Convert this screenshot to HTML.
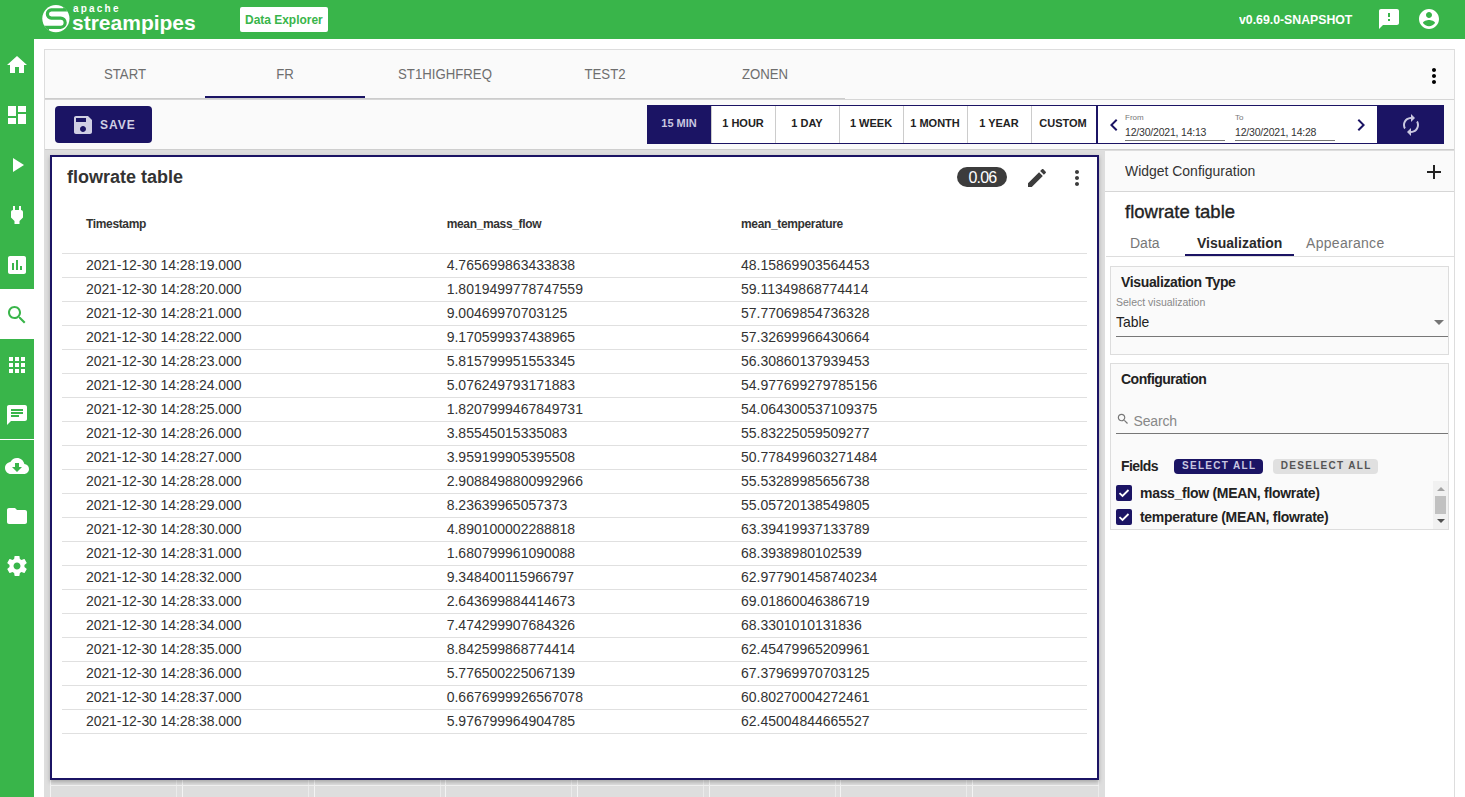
<!DOCTYPE html>
<html><head><meta charset="utf-8"><title>StreamPipes Data Explorer</title>
<style>
*{box-sizing:border-box;margin:0;padding:0}
html,body{width:1465px;height:797px;overflow:hidden;background:#fff;font-family:"Liberation Sans",sans-serif;color:#333}
.a{position:absolute;white-space:nowrap}
.t{position:absolute;white-space:nowrap;line-height:1}
</style></head><body>

<div class="a" style="left:0;top:0;width:1465px;height:39px;background:#39b54a"></div>
<svg class="a" style="left:38px;top:0" width="40" height="38" viewBox="38 0 40 38">
<defs><clipPath id="lc"><circle cx="55.9" cy="18.6" r="13.6"/></clipPath></defs>
<circle cx="55.9" cy="18.6" r="13.6" fill="#fff"/>
<g clip-path="url(#lc)" fill="none" stroke="#39b54a" stroke-width="3.2">
<path d="M80 9.85 H51.3 A4.13 4.13 0 0 0 51.3 18.1 H60.6 A4.6 4.6 0 0 1 60.6 27.3 H30"/>
</g>
<g clip-path="url(#lc)" fill="#39b54a"><rect x="63.3" y="0" width="20" height="9.9"/><rect x="30" y="27.3" width="19" height="15"/></g>
</svg>
<div class="t" style="left:73px;top:4px;font-size:10px;font-weight:bold;color:#fff;letter-spacing:2.2px">apache</div>
<div class="t" style="left:72px;top:12px;font-size:21px;font-weight:bold;color:#fff;letter-spacing:0px">streampipes</div>
<div class="a" style="left:240px;top:7px;width:88px;height:25px;background:#fff;border-radius:2px"></div>
<div class="t" style="left:245px;top:12.5px;font-size:13px;font-weight:bold;color:#39b54a;transform:scaleX(0.92);transform-origin:0 0">Data Explorer</div>
<div class="t" style="left:1239px;top:13px;font-size:13px;font-weight:bold;color:#fff;transform:scaleX(0.945);transform-origin:0 0">v0.69.0-SNAPSHOT</div>
<svg style="position:absolute;left:1377px;top:7px;width:24px;height:24px" viewBox="0 0 24 24"><path fill="#fff" d="M20 2H4c-1.1 0-1.99.9-1.99 2L2 22l4-4h14c1.1 0 2-.9 2-2V4c0-1.1-.9-2-2-2zm-7 12h-2v-2h2v2zm0-4h-2V6h2v4z"/></svg>
<svg style="position:absolute;left:1417px;top:7px;width:24px;height:24px" viewBox="0 0 24 24"><path fill="#fff" d="M12 2C6.48 2 2 6.48 2 12s4.48 10 10 10 10-4.48 10-10S17.52 2 12 2zm0 3c1.66 0 3 1.34 3 3s-1.34 3-3 3-3-1.34-3-3 1.34-3 3-3zm0 14.2c-2.5 0-4.71-1.28-6-3.22.03-1.99 4-3.08 6-3.08 1.99 0 5.97 1.09 6 3.08-1.29 1.94-3.5 3.22-6 3.220z"/></svg>
<div class="a" style="left:0;top:39px;width:34px;height:758px;background:#39b54a"></div>
<div class="a" style="left:0;top:289px;width:34px;height:50px;background:#fff"></div>
<div class="a" style="left:0;top:439px;width:34px;height:1px;background:#fff"></div>
<svg style="position:absolute;left:4.5px;top:53px;width:24px;height:24px" viewBox="0 0 24 24"><path fill="#fff" d="M10 20v-6h4v6h5v-8h3L12 3 2 12h3v8z"/></svg>
<svg style="position:absolute;left:4.5px;top:103px;width:24px;height:24px" viewBox="0 0 24 24"><path fill="#fff" d="M3 13h8V3H3v10zm0 8h8v-6H3v6zm10 0h8V11h-8v10zm0-18v6h8V3h-8z"/></svg>
<svg style="position:absolute;left:4.5px;top:153px;width:24px;height:24px" viewBox="0 0 24 24"><path fill="#fff" d="M8 5v14l11-7z"/></svg>
<svg style="position:absolute;left:4.5px;top:203px;width:24px;height:24px" viewBox="0 0 24 24"><path fill="#fff" d="M16.01 7L16 3h-2v4h-4V3H8v4h-.01C7 6.99 6 7.99 6 8.99v5.49L9.5 18v3h5v-3l3.5-3.51v-5.5c0-1-1-2-1.99-1.99z"/></svg>
<svg style="position:absolute;left:4.5px;top:253px;width:24px;height:24px" viewBox="0 0 24 24"><path fill="#fff" d="M19 3H5c-1.1 0-2 .9-2 2v14c0 1.1.9 2 2 2h14c1.1 0 2-.9 2-2V5c0-1.1-.9-2-2-2zM9 17H7v-7h2v7zm4 0h-2V7h2v10zm4 0h-2v-4h2v4z"/></svg>
<svg style="position:absolute;left:4.5px;top:303px;width:24px;height:24px" viewBox="0 0 24 24"><path fill="#39b54a" d="M15.5 14h-.79l-.28-.27C15.41 12.59 16 11.11 16 9.5 16 5.91 13.09 3 9.5 3S3 5.91 3 9.5 5.91 16 9.5 16c1.61 0 3.09-.59 4.23-1.57l.27.28v.79l5 4.99L20.49 19l-4.99-5zm-6 0C7.01 14 5 11.99 5 9.5S7.01 5 9.5 5 14 7.01 14 9.5 11.99 14 9.5 14z"/></svg>
<svg style="position:absolute;left:4.5px;top:353px;width:24px;height:24px" viewBox="0 0 24 24"><path fill="#fff" d="M4 8h4V4H4v4zm6 12h4v-4h-4v4zm-6 0h4v-4H4v4zm0-6h4v-4H4v4zm6 0h4v-4h-4v4zm6-10v4h4V4h-4zm-6 4h4V4h-4v4zm6 6h4v-4h-4v4zm0 6h4v-4h-4v4z"/></svg>
<svg style="position:absolute;left:4.5px;top:403px;width:24px;height:24px" viewBox="0 0 24 24"><path fill="#fff" d="M20 2H4c-1.1 0-1.99.9-1.99 2L2 22l4-4h14c1.1 0 2-.9 2-2V4c0-1.1-.9-2-2-2zM6 9h12v2H6V9zm8 5H6v-2h8v2zm4-6H6V6h12v2z"/></svg>
<svg style="position:absolute;left:4.5px;top:454px;width:24px;height:24px" viewBox="0 0 24 24"><path fill="#fff" d="M19.35 10.04C18.67 6.59 15.64 4 12 4 9.11 4 6.6 5.64 5.35 8.04 2.34 8.36 0 10.91 0 14c0 3.310 2.69 6 6 6h13c2.76 0 5-2.24 5-5 0-2.64-2.05-4.78-4.65-4.96zM17 13l-5 5-5-5h3V9h4v4h3z"/></svg>
<svg style="position:absolute;left:4.5px;top:504px;width:24px;height:24px" viewBox="0 0 24 24"><path fill="#fff" d="M10 4H4c-1.1 0-1.99.9-1.99 2L2 18c0 1.1.9 2 2 2h16c1.1 0 2-.9 2-2V8c0-1.1-.9-2-2-2h-8l-2-2z"/></svg>
<svg style="position:absolute;left:4.5px;top:554px;width:24px;height:24px" viewBox="0 0 24 24"><path fill="#fff" d="M19.43 12.98c.04-.32.07-.64.07-.98s-.03-.66-.07-.98l2.11-1.650c.19-.15.24-.42.12-.64l-2-3.46c-.12-.22-.39-.3-.61-.22l-2.49 1c-.52-.4-1.08-.73-1.69-.98l-.38-2.65C14.46 2.18 14.25 2 14 2h-4c-.25 0-.46.18-.49.42l-.38 2.65c-.61.25-1.17.59-1.69.98l-2.49-1c-.23-.09-.49 0-.61.22l-2 3.46c-.13.22-.07.49.12.64l2.11 1.65c-.04.32-.07.65-.07.98s.03.66.07.98l-2.11 1.65c-.19.15-.24.42-.12.64l2 3.46c.12.22.39.3.61.22l2.49-1c.52.4 1.08.73 1.69.98l.38 2.65c.03.24.24.42.49.42h4c.25 0 .46-.18.49-.42l.38-2.65c.61-.25 1.17-.59 1.69-.98l2.49 1c.23.09.49 0 .61-.22l2-3.46c.12-.22.07-.49-.12-.64l-2.11-1.65zM12 15.5c-1.93 0-3.5-1.57-3.5-3.5s1.57-3.5 3.5-3.5 3.5 1.57 3.5 3.5-1.57 3.5-3.5 3.5z"/></svg>
<div class="a" style="left:44px;top:49px;width:1411px;height:101px;background:#fafafa;border:1px solid #ddd"></div>
<div class="a" style="left:45px;top:98px;width:800px;height:1px;background:#ccc"></div>
<div class="a" style="left:45px;top:99px;width:1409px;height:1px;background:#d6d6d6"></div>
<div class="t" style="left:45px;top:65.5px;width:160px;text-align:center;font-size:15px;color:#6e6e6e;transform:scaleX(0.88);transform-origin:50% 0">START</div>
<div class="t" style="left:205px;top:65.5px;width:160px;text-align:center;font-size:15px;color:#6e6e6e;transform:scaleX(0.88);transform-origin:50% 0">FR</div>
<div class="t" style="left:365px;top:65.5px;width:160px;text-align:center;font-size:15px;color:#6e6e6e;transform:scaleX(0.88);transform-origin:50% 0">ST1HIGHFREQ</div>
<div class="t" style="left:525px;top:65.5px;width:160px;text-align:center;font-size:15px;color:#6e6e6e;transform:scaleX(0.88);transform-origin:50% 0">TEST2</div>
<div class="t" style="left:685px;top:65.5px;width:160px;text-align:center;font-size:15px;color:#6e6e6e;transform:scaleX(0.88);transform-origin:50% 0">ZONEN</div>
<div class="a" style="left:205px;top:96px;width:160px;height:2px;background:#1b1464"></div>
<svg class="a" style="left:1422px;top:64px" width="24" height="24" viewBox="0 0 24 24"><path fill="#000" d="M12 8c1.1 0 2-.9 2-2s-.9-2-2-2-2 .9-2 2 .9 2 2 2zm0 2c-1.1 0-2 .9-2 2s.9 2 2 2 2-.9 2-2-.9-2-2-2zm0 6c-1.1 0-2 .9-2 2s.9 2 2 2 2-.9 2-2-.9-2-2-2z"/></svg>
<div class="a" style="left:55px;top:106px;width:97px;height:37px;background:#1b1464;border-radius:4px"></div>
<svg style="position:absolute;left:71px;top:113px;width:24px;height:24px" viewBox="0 0 24 24"><path fill="#d0cfe3" d="M17 3H5c-1.11 0-2 .9-2 2v14c0 1.1.89 2 2 2h14c1.1 0 2-.9 2-2V7l-4-4zm-5 16c-1.66 0-3-1.34-3-3s1.34-3 3-3 3 1.34 3 3-1.34 3-3 3zm3-10H5V5h10v4z"/></svg>
<div class="t" style="left:100px;top:119px;font-size:12px;font-weight:bold;color:#d0cfe3;letter-spacing:1px">SAVE</div>
<div class="a" style="left:647px;top:105px;width:451px;height:39px;border:1px solid #1b1464;border-right:2px solid #1b1464;background:#fff"></div>
<div class="a" style="left:647px;top:105px;width:64px;height:39px;background:#1b1464"></div>
<div class="t" style="left:647px;top:118px;width:64px;text-align:center;font-size:11px;font-weight:bold;color:#c9c7e0">15 MIN</div>
<div class="a" style="left:711px;top:106px;width:1px;height:37px;background:#ccc"></div>
<div class="t" style="left:711px;top:118px;width:64px;text-align:center;font-size:11px;font-weight:bold;color:#222">1 HOUR</div>
<div class="a" style="left:775px;top:106px;width:1px;height:37px;background:#ccc"></div>
<div class="t" style="left:775px;top:118px;width:64px;text-align:center;font-size:11px;font-weight:bold;color:#222">1 DAY</div>
<div class="a" style="left:839px;top:106px;width:1px;height:37px;background:#ccc"></div>
<div class="t" style="left:839px;top:118px;width:64px;text-align:center;font-size:11px;font-weight:bold;color:#222">1 WEEK</div>
<div class="a" style="left:903px;top:106px;width:1px;height:37px;background:#ccc"></div>
<div class="t" style="left:903px;top:118px;width:64px;text-align:center;font-size:11px;font-weight:bold;color:#222">1 MONTH</div>
<div class="a" style="left:967px;top:106px;width:1px;height:37px;background:#ccc"></div>
<div class="t" style="left:967px;top:118px;width:64px;text-align:center;font-size:11px;font-weight:bold;color:#222">1 YEAR</div>
<div class="a" style="left:1031px;top:106px;width:1px;height:37px;background:#ccc"></div>
<div class="t" style="left:1031px;top:118px;width:64px;text-align:center;font-size:11px;font-weight:bold;color:#222">CUSTOM</div>
<div class="a" style="left:1098px;top:105px;width:280px;height:39px;border:1px solid #1b1464;border-left:0;background:#fff"></div>
<svg style="position:absolute;left:1102px;top:113px;width:24px;height:24px" viewBox="0 0 24 24"><path fill="#1b1464" d="M15.41 7.41L14 6l-6 6 6 6 1.41-1.41L10.83 12z"/></svg>
<svg style="position:absolute;left:1349px;top:113px;width:24px;height:24px" viewBox="0 0 24 24"><path fill="#1b1464" d="M10 6L8.59 7.41 13.17 12l-4.58 4.59L10 18l6-6z"/></svg>
<div class="t" style="left:1125px;top:114px;font-size:8px;color:#777">From</div>
<div class="t" style="left:1125px;top:126.5px;font-size:10.5px;letter-spacing:-0.2px;color:#333">12/30/2021, 14:13</div>
<div class="a" style="left:1125px;top:140px;width:100px;height:1px;background:#777"></div>
<div class="t" style="left:1235px;top:114px;font-size:8px;color:#777">To</div>
<div class="t" style="left:1235px;top:126.5px;font-size:10.5px;letter-spacing:-0.2px;color:#333">12/30/2021, 14:28</div>
<div class="a" style="left:1235px;top:140px;width:100px;height:1px;background:#777"></div>
<div class="a" style="left:1377px;top:105px;width:67px;height:39px;background:#1b1464"></div>
<svg style="position:absolute;left:1399px;top:112.5px;width:24px;height:24px" viewBox="0 0 24 24"><path fill="#c9c7e0" d="M12 6v3l4-4-4-4v3c-4.42 0-8 3.58-8 8 0 1.57.46 3.03 1.24 4.26L6.7 14.8c-.45-.83-.7-1.79-.7-2.8 0-3.31 2.69-6 6-6zm6.76 1.74L17.3 9.2c.44.84.7 1.79.7 2.8 0 3.31-2.69 6-6 6v-3l-4 4 4 4v-3c4.42 0 8-3.58 8-8 0-1.57-.46-3.03-1.24-4.26z"/></svg>
<div class="a" style="left:44px;top:150px;width:1061px;height:647px;background:#dedede"></div>
<div class="a" style="left:50px;top:779px;width:127px;height:30px;border-left:1px solid #f4f4f4;border-right:1px solid #ebebeb"></div>
<div class="a" style="left:182px;top:779px;width:127px;height:30px;border-left:1px solid #f4f4f4;border-right:1px solid #ebebeb"></div>
<div class="a" style="left:314px;top:779px;width:127px;height:30px;border-left:1px solid #f4f4f4;border-right:1px solid #ebebeb"></div>
<div class="a" style="left:445px;top:779px;width:127px;height:30px;border-left:1px solid #f4f4f4;border-right:1px solid #ebebeb"></div>
<div class="a" style="left:577px;top:779px;width:127px;height:30px;border-left:1px solid #f4f4f4;border-right:1px solid #ebebeb"></div>
<div class="a" style="left:709px;top:779px;width:127px;height:30px;border-left:1px solid #f4f4f4;border-right:1px solid #ebebeb"></div>
<div class="a" style="left:840px;top:779px;width:127px;height:30px;border-left:1px solid #f4f4f4;border-right:1px solid #ebebeb"></div>
<div class="a" style="left:972px;top:779px;width:127px;height:30px;border-left:1px solid #f4f4f4;border-right:1px solid #ebebeb"></div>
<div class="a" style="left:50px;top:785px;width:1049px;height:1px;background:#f2f2f2"></div>
<div class="a" style="left:45px;top:149px;width:1409px;height:1px;background:#cecece"></div>
<div class="a" style="left:50px;top:155px;width:1049px;height:625px;background:#fff;border:2px solid #1b1464;box-shadow:0 2px 4px rgba(0,0,0,.25)"></div>
<div class="t" style="left:67px;top:168px;font-size:18px;font-weight:bold;color:#333">flowrate table</div>
<div class="a" style="left:957px;top:167px;width:50px;height:20px;background:#3c3c3c;border-radius:10px"></div>
<div class="t" style="left:957px;top:169.5px;width:50px;text-align:center;font-size:16px;letter-spacing:-0.8px;text-indent:0.8px;color:#fff">0.06</div>
<svg style="position:absolute;left:1025px;top:166px;width:24px;height:24px" viewBox="0 0 24 24"><path fill="#3c3c3c" d="M3 17.25V21h3.75L17.81 9.94l-3.75-3.75L3 17.25zM20.71 7.04c.39-.39.39-1.02 0-1.41l-2.34-2.34c-.39-.39-1.020-.39-1.41 0l-1.83 1.83 3.75 3.75 1.83-1.83z"/></svg>
<svg style="position:absolute;left:1065px;top:166px;width:24px;height:24px" viewBox="0 0 24 24"><path fill="#3c3c3c" d="M12 8c1.1 0 2-.9 2-2s-.9-2-2-2-2 .9-2 2 .9 2 2 2zm0 2c-1.1 0-2 .9-2 2s.9 2 2 2 2-.9 2-2-.9-2-2-2zm0 6c-1.1 0-2 .9-2 2s.9 2 2 2 2-.9 2-2-.9-2-2-2z"/></svg>
<div class="t" style="left:86px;top:218px;font-size:12px;font-weight:bold;letter-spacing:-0.35px;color:#333">Timestamp</div>
<div class="t" style="left:446.7px;top:218px;font-size:12px;font-weight:bold;letter-spacing:-0.35px;color:#333">mean_mass_flow</div>
<div class="t" style="left:741px;top:218px;font-size:12px;font-weight:bold;letter-spacing:-0.35px;color:#333">mean_temperature</div>
<div class="a" style="left:62px;top:253px;width:1025px;height:1px;background:#e0e0e0"></div>
<div class="t" style="left:86px;top:258px;font-size:14px;color:#333;letter-spacing:-0.08px">2021-12-30 14:28:19.000</div>
<div class="t" style="left:446.7px;top:258px;font-size:14px;color:#333">4.765699863433838</div>
<div class="t" style="left:741px;top:258px;font-size:14px;color:#333">48.15869903564453</div>
<div class="a" style="left:62px;top:277px;width:1025px;height:1px;background:#e0e0e0"></div>
<div class="t" style="left:86px;top:282px;font-size:14px;color:#333;letter-spacing:-0.08px">2021-12-30 14:28:20.000</div>
<div class="t" style="left:446.7px;top:282px;font-size:14px;color:#333">1.8019499778747559</div>
<div class="t" style="left:741px;top:282px;font-size:14px;color:#333">59.11349868774414</div>
<div class="a" style="left:62px;top:301px;width:1025px;height:1px;background:#e0e0e0"></div>
<div class="t" style="left:86px;top:306px;font-size:14px;color:#333;letter-spacing:-0.08px">2021-12-30 14:28:21.000</div>
<div class="t" style="left:446.7px;top:306px;font-size:14px;color:#333">9.00469970703125</div>
<div class="t" style="left:741px;top:306px;font-size:14px;color:#333">57.77069854736328</div>
<div class="a" style="left:62px;top:325px;width:1025px;height:1px;background:#e0e0e0"></div>
<div class="t" style="left:86px;top:330px;font-size:14px;color:#333;letter-spacing:-0.08px">2021-12-30 14:28:22.000</div>
<div class="t" style="left:446.7px;top:330px;font-size:14px;color:#333">9.170599937438965</div>
<div class="t" style="left:741px;top:330px;font-size:14px;color:#333">57.32699966430664</div>
<div class="a" style="left:62px;top:349px;width:1025px;height:1px;background:#e0e0e0"></div>
<div class="t" style="left:86px;top:354px;font-size:14px;color:#333;letter-spacing:-0.08px">2021-12-30 14:28:23.000</div>
<div class="t" style="left:446.7px;top:354px;font-size:14px;color:#333">5.815799951553345</div>
<div class="t" style="left:741px;top:354px;font-size:14px;color:#333">56.30860137939453</div>
<div class="a" style="left:62px;top:373px;width:1025px;height:1px;background:#e0e0e0"></div>
<div class="t" style="left:86px;top:378px;font-size:14px;color:#333;letter-spacing:-0.08px">2021-12-30 14:28:24.000</div>
<div class="t" style="left:446.7px;top:378px;font-size:14px;color:#333">5.076249793171883</div>
<div class="t" style="left:741px;top:378px;font-size:14px;color:#333">54.977699279785156</div>
<div class="a" style="left:62px;top:397px;width:1025px;height:1px;background:#e0e0e0"></div>
<div class="t" style="left:86px;top:402px;font-size:14px;color:#333;letter-spacing:-0.08px">2021-12-30 14:28:25.000</div>
<div class="t" style="left:446.7px;top:402px;font-size:14px;color:#333">1.8207999467849731</div>
<div class="t" style="left:741px;top:402px;font-size:14px;color:#333">54.064300537109375</div>
<div class="a" style="left:62px;top:421px;width:1025px;height:1px;background:#e0e0e0"></div>
<div class="t" style="left:86px;top:426px;font-size:14px;color:#333;letter-spacing:-0.08px">2021-12-30 14:28:26.000</div>
<div class="t" style="left:446.7px;top:426px;font-size:14px;color:#333">3.85545015335083</div>
<div class="t" style="left:741px;top:426px;font-size:14px;color:#333">55.83225059509277</div>
<div class="a" style="left:62px;top:445px;width:1025px;height:1px;background:#e0e0e0"></div>
<div class="t" style="left:86px;top:450px;font-size:14px;color:#333;letter-spacing:-0.08px">2021-12-30 14:28:27.000</div>
<div class="t" style="left:446.7px;top:450px;font-size:14px;color:#333">3.959199905395508</div>
<div class="t" style="left:741px;top:450px;font-size:14px;color:#333">50.778499603271484</div>
<div class="a" style="left:62px;top:469px;width:1025px;height:1px;background:#e0e0e0"></div>
<div class="t" style="left:86px;top:474px;font-size:14px;color:#333;letter-spacing:-0.08px">2021-12-30 14:28:28.000</div>
<div class="t" style="left:446.7px;top:474px;font-size:14px;color:#333">2.9088498800992966</div>
<div class="t" style="left:741px;top:474px;font-size:14px;color:#333">55.53289985656738</div>
<div class="a" style="left:62px;top:493px;width:1025px;height:1px;background:#e0e0e0"></div>
<div class="t" style="left:86px;top:498px;font-size:14px;color:#333;letter-spacing:-0.08px">2021-12-30 14:28:29.000</div>
<div class="t" style="left:446.7px;top:498px;font-size:14px;color:#333">8.23639965057373</div>
<div class="t" style="left:741px;top:498px;font-size:14px;color:#333">55.05720138549805</div>
<div class="a" style="left:62px;top:517px;width:1025px;height:1px;background:#e0e0e0"></div>
<div class="t" style="left:86px;top:522px;font-size:14px;color:#333;letter-spacing:-0.08px">2021-12-30 14:28:30.000</div>
<div class="t" style="left:446.7px;top:522px;font-size:14px;color:#333">4.890100002288818</div>
<div class="t" style="left:741px;top:522px;font-size:14px;color:#333">63.39419937133789</div>
<div class="a" style="left:62px;top:541px;width:1025px;height:1px;background:#e0e0e0"></div>
<div class="t" style="left:86px;top:546px;font-size:14px;color:#333;letter-spacing:-0.08px">2021-12-30 14:28:31.000</div>
<div class="t" style="left:446.7px;top:546px;font-size:14px;color:#333">1.680799961090088</div>
<div class="t" style="left:741px;top:546px;font-size:14px;color:#333">68.3938980102539</div>
<div class="a" style="left:62px;top:565px;width:1025px;height:1px;background:#e0e0e0"></div>
<div class="t" style="left:86px;top:570px;font-size:14px;color:#333;letter-spacing:-0.08px">2021-12-30 14:28:32.000</div>
<div class="t" style="left:446.7px;top:570px;font-size:14px;color:#333">9.348400115966797</div>
<div class="t" style="left:741px;top:570px;font-size:14px;color:#333">62.977901458740234</div>
<div class="a" style="left:62px;top:589px;width:1025px;height:1px;background:#e0e0e0"></div>
<div class="t" style="left:86px;top:594px;font-size:14px;color:#333;letter-spacing:-0.08px">2021-12-30 14:28:33.000</div>
<div class="t" style="left:446.7px;top:594px;font-size:14px;color:#333">2.643699884414673</div>
<div class="t" style="left:741px;top:594px;font-size:14px;color:#333">69.01860046386719</div>
<div class="a" style="left:62px;top:613px;width:1025px;height:1px;background:#e0e0e0"></div>
<div class="t" style="left:86px;top:618px;font-size:14px;color:#333;letter-spacing:-0.08px">2021-12-30 14:28:34.000</div>
<div class="t" style="left:446.7px;top:618px;font-size:14px;color:#333">7.474299907684326</div>
<div class="t" style="left:741px;top:618px;font-size:14px;color:#333">68.3301010131836</div>
<div class="a" style="left:62px;top:637px;width:1025px;height:1px;background:#e0e0e0"></div>
<div class="t" style="left:86px;top:642px;font-size:14px;color:#333;letter-spacing:-0.08px">2021-12-30 14:28:35.000</div>
<div class="t" style="left:446.7px;top:642px;font-size:14px;color:#333">8.842599868774414</div>
<div class="t" style="left:741px;top:642px;font-size:14px;color:#333">62.45479965209961</div>
<div class="a" style="left:62px;top:661px;width:1025px;height:1px;background:#e0e0e0"></div>
<div class="t" style="left:86px;top:666px;font-size:14px;color:#333;letter-spacing:-0.08px">2021-12-30 14:28:36.000</div>
<div class="t" style="left:446.7px;top:666px;font-size:14px;color:#333">5.776500225067139</div>
<div class="t" style="left:741px;top:666px;font-size:14px;color:#333">67.37969970703125</div>
<div class="a" style="left:62px;top:685px;width:1025px;height:1px;background:#e0e0e0"></div>
<div class="t" style="left:86px;top:690px;font-size:14px;color:#333;letter-spacing:-0.08px">2021-12-30 14:28:37.000</div>
<div class="t" style="left:446.7px;top:690px;font-size:14px;color:#333">0.6676999926567078</div>
<div class="t" style="left:741px;top:690px;font-size:14px;color:#333">60.80270004272461</div>
<div class="a" style="left:62px;top:709px;width:1025px;height:1px;background:#e0e0e0"></div>
<div class="t" style="left:86px;top:714px;font-size:14px;color:#333;letter-spacing:-0.08px">2021-12-30 14:28:38.000</div>
<div class="t" style="left:446.7px;top:714px;font-size:14px;color:#333">5.976799964904785</div>
<div class="t" style="left:741px;top:714px;font-size:14px;color:#333">62.45004844665527</div>
<div class="a" style="left:62px;top:733px;width:1025px;height:1px;background:#e0e0e0"></div>
<div class="a" style="left:1105px;top:150px;width:350px;height:647px;background:#fff;border:1px solid #ddd;border-bottom:0;border-left:0"></div>
<div class="a" style="left:1105px;top:151px;width:349px;height:41px;background:#fafafa;border-bottom:1px solid #d6d6d6"></div>
<div class="t" style="left:1125px;top:163px;font-size:15px;color:#333;transform:scaleX(0.93);transform-origin:0 0">Widget Configuration</div>
<svg style="position:absolute;left:1422px;top:160px;width:24px;height:24px" viewBox="0 0 24 24"><path fill="#222" d="M19 13h-6v6h-2v-6H5v-2h6V5h2v6h6v2z"/></svg>
<div class="t" style="left:1125px;top:202.5px;font-size:18.5px;-webkit-text-stroke:0.35px #222;color:#222">flowrate table</div>
<div class="t" style="left:1130px;top:236px;font-size:14px;color:#777">Data</div>
<div class="t" style="left:1197px;top:236px;font-size:14px;font-weight:bold;color:#2a2a2a">Visualization</div>
<div class="t" style="left:1306px;top:236px;font-size:14px;letter-spacing:0.3px;color:#777">Appearance</div>
<div class="a" style="left:1106px;top:256px;width:348px;height:1px;background:#ddd"></div>
<div class="a" style="left:1185px;top:254px;width:109px;height:2px;background:#1b1464"></div>
<div class="a" style="left:1110px;top:266px;width:339px;height:89px;background:#fafafa;border:1px solid #ddd"></div>
<div class="t" style="left:1121px;top:275px;font-size:14px;font-weight:bold;color:#222;letter-spacing:-0.35px">Visualization Type</div>
<div class="t" style="left:1116px;top:297px;font-size:10.5px;color:#888">Select visualization</div>
<div class="t" style="left:1116px;top:313.5px;font-size:15px;color:#222;transform:scaleX(0.93);transform-origin:0 0">Table</div>
<div class="a" style="left:1116px;top:336px;width:332px;height:1px;background:#777"></div>
<svg class="a" style="left:1434px;top:320px" width="10" height="5" viewBox="0 0 10 5"><path fill="#757575" d="M0 0h10L5 5z"/></svg>
<div class="a" style="left:1110px;top:363px;width:339px;height:167px;background:#fafafa;border:1px solid #ddd"></div>
<div class="t" style="left:1121px;top:372px;font-size:14px;font-weight:bold;color:#222;letter-spacing:-0.5px">Configuration</div>
<svg class="a" style="left:1116px;top:411.5px" width="14" height="14" viewBox="0 0 24 24"><path fill="#777" d="M15.5 14h-.79l-.28-.27C15.41 12.59 16 11.11 16 9.5 16 5.91 13.09 3 9.5 3S3 5.91 3 9.5 5.91 16 9.5 16c1.61 0 3.09-.59 4.23-1.57l.27.28v.79l5 4.99L20.49 19l-4.99-5zm-6 0C7.01 14 5 11.99 5 9.5S7.01 5 9.5 5 14 7.01 14 9.5 11.99 14 9.5 14z"/></svg>
<div class="t" style="left:1133.5px;top:414px;font-size:14px;letter-spacing:-0.15px;color:#888">Search</div>
<div class="a" style="left:1116px;top:433px;width:332px;height:1px;background:#777"></div>
<div class="t" style="left:1121px;top:459px;font-size:14px;font-weight:bold;color:#222;letter-spacing:-0.6px">Fields</div>
<div class="a" style="left:1174px;top:459px;width:89px;height:15px;background:#1b1464;border-radius:4px"></div>
<div class="t" style="left:1174px;top:461px;width:89px;text-align:center;font-size:10px;font-weight:bold;color:#c9c7e0;letter-spacing:1.3px;text-indent:1.3px">SELECT ALL</div>
<div class="a" style="left:1273px;top:459px;width:105px;height:15px;background:#e0e0e0;border-radius:4px"></div>
<div class="t" style="left:1273px;top:461px;width:105px;text-align:center;font-size:10px;font-weight:bold;color:#555;letter-spacing:1.3px;text-indent:1.3px">DESELECT ALL</div>
<div class="a" style="left:1116px;top:485px;width:16px;height:16px;background:#1b1464;border-radius:2px"></div>
<svg class="a" style="left:1116px;top:485px" width="16" height="16" viewBox="0 0 16 16"><path fill="none" stroke="#fff" stroke-width="1.8" d="M3.5 8.2 L6.5 11 L12.5 5"/></svg>
<div class="t" style="left:1140px;top:486px;font-size:14px;font-weight:bold;color:#222;letter-spacing:-0.3px">mass_flow (MEAN, flowrate)</div>
<div class="a" style="left:1116px;top:509px;width:16px;height:16px;background:#1b1464;border-radius:2px"></div>
<svg class="a" style="left:1116px;top:509px" width="16" height="16" viewBox="0 0 16 16"><path fill="none" stroke="#fff" stroke-width="1.8" d="M3.5 8.2 L6.5 11 L12.5 5"/></svg>
<div class="t" style="left:1140px;top:510px;font-size:14px;font-weight:bold;color:#222;letter-spacing:-0.3px">temperature (MEAN, flowrate)</div>
<div class="a" style="left:1433px;top:481px;width:15px;height:48px;background:#f1f1f1"></div>
<div class="a" style="left:1435px;top:496px;width:11px;height:18px;background:#c1c1c1"></div>
<svg class="a" style="left:1433.5px;top:484.5px" width="14" height="8" viewBox="0 0 14 8"><path fill="#a3a3a3" d="M3 6h8L7 2z"/></svg>
<svg class="a" style="left:1433.5px;top:517px" width="14" height="8" viewBox="0 0 14 8"><path fill="#505050" d="M3 2h8L7 6z"/></svg>
</body></html>
